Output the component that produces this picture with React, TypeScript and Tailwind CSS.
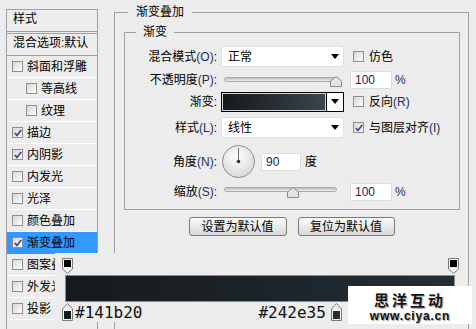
import React from "react";

type LayerItem = { label: string; on?: boolean; indent?: boolean; active?: boolean };

const layers: LayerItem[] = [
  { label: "斜面和浮雕" },
  { label: "等高线", indent: true },
  { label: "纹理", indent: true },
  { label: "描边", on: true },
  { label: "内阴影", on: true },
  { label: "内发光" },
  { label: "光泽" },
  { label: "颜色叠加" },
  { label: "渐变叠加", on: true, active: true },
  { label: "图案叠加" },
  { label: "外发光" },
  { label: "投影" },
];

const Check = ({ on = false }: { on?: boolean }) => (
  <span className="relative block h-[11px] w-[11px] shrink-0 border border-[#8e8f8f] bg-linear-to-br from-[#d6d6d6] to-white">
    {on && (
      <svg className="absolute left-[1px] top-[1px]" width="8" height="8" viewBox="0 0 8 8">
        <path d="M0.8 4L3 6.4L7.2 1" fill="none" stroke="#34449a" strokeWidth="1.6" />
      </svg>
    )}
  </span>
);

const Arrow = () => (
  <svg width="8" height="5" viewBox="0 0 8 5">
    <path d="M0 0H8L4 5Z" fill="#000" />
  </svg>
);

const Thumb = () => (
  <svg width="12" height="11" viewBox="0 0 12 11">
    <path d="M0.5 10.5V5L6 0.5L11.5 5V10.5Z" fill="#e4e4e4" stroke="#8a8a8a" />
  </svg>
);

// gradient stop markers
const StopTop = ({ color }: { color: string }) => (
  <svg width="11" height="16" viewBox="0 0 11 16">
    <path d="M0.5 0.5H10.5V11L5.5 15.5L0.5 11Z" fill="#f2f2f2" stroke="#7a7a7a" />
    <rect x="2" y="2" width="7" height="7" fill={color} />
  </svg>
);

const StopBottom = ({ color }: { color: string }) => (
  <svg width="11" height="18" viewBox="0 0 11 18">
    <path d="M0.5 17.5H10.5V6L5.5 0.5L0.5 6Z" fill="#f2f2f2" stroke="#7a7a7a" />
    <rect x="2" y="8" width="7" height="8" fill={color} />
  </svg>
);

const Label = ({ text, key_ }: { text: string; key_?: string }) => (
  <div className="w-[92px] shrink-0 whitespace-nowrap text-right leading-[16px]">
    {text}
    {key_ && <span className="text-[#1d2c5c]">({key_})</span>}:
  </div>
);

const Select = ({ value }: { value: string }) => (
  <div className="ml-[4px] flex h-[21px] w-[123px] shrink-0 items-center justify-between rounded-[2px] border border-[#e0e0e0] bg-white pl-[6px] pr-[4px]">
    <span className="leading-[16px]">{value}</span>
    <Arrow />
  </div>
);

const NumBox = ({ value, w = "w-[42px]" }: { value: string; w?: string }) => (
  <div className={`flex h-[18px] ${w} shrink-0 items-center rounded-[2px] border border-[#dcdcdc] bg-white pl-[4px] leading-[16px] text-[#1c1c50]`}>
    {value}
  </div>
);

const CheckLabel = ({ label, on, k }: { label: string; on?: boolean; k?: string }) => (
  <div className="ml-[9px] flex items-center gap-[5px] whitespace-nowrap leading-[16px]">
    <Check on={on} />
    <span>
      {label}
      {k && <span className="text-[#1d2c5c]">({k})</span>}
    </span>
  </div>
);

export default function App() {
  return (
    <div className="relative flex h-[329px] w-[476px] items-start overflow-hidden bg-[#ececec] font-['Liberation_Sans','Noto_Sans_CJK_SC',sans-serif] text-[12px] text-black">
      {/* style list */}
      <div className="ml-[6px] mt-[9px] h-[330px] w-[92px] shrink-0 border border-[#a0a0a0]">
        <div className="h-[22px] border-b border-[#a0a0a0] pl-[6px] pt-[1px] leading-[16px]">样式</div>
        <div className="mt-[1px] h-[23px] whitespace-nowrap border-y border-[#a0a0a0] pl-[6px] pt-[1px] leading-[16px]">
          混合选项:默认
        </div>
        {layers.map((l) => (
          <div
            key={l.label}
            className={`flex h-[22px] items-center gap-[4px] border-b ${
              l.active ? "border-[#3399ff] bg-[#3399ff]" : "border-white"
            } ${l.indent ? "pl-[19px]" : "pl-[5px]"}`}
          >
            <Check on={l.on} />
            <span className="whitespace-nowrap leading-[16px]">{l.label}</span>
          </div>
        ))}
      </div>

      {/* gradient overlay panel */}
      <fieldset className="ml-[16px] mt-[4px] h-[340px] w-[355px] shrink-0 border border-[#a0a0a0]">
        <legend className="ml-[13px] px-[8px] leading-[16px]">渐变叠加</legend>

        <fieldset className="ml-[9px] mt-[4px] w-[336px] border border-[#a0a0a0] pb-[7px]">
          <legend className="ml-[11px] px-[7px] leading-[16px]">渐变</legend>

          <div className="mt-[6px] flex h-[21px] items-center">
            <Label text="混合模式" key_="O" />
            <Select value="正常" />
            <CheckLabel label="仿色" />
          </div>

          <div className="mt-[3px] flex h-[20px] items-center">
            <Label text="不透明度" key_="P" />
            <div className="relative ml-[4px] h-full w-[123px] shrink-0">
              <div className="absolute left-[3px] top-[7px] h-[5px] w-[114px] rounded-full border border-[#a9a9a9] bg-linear-to-b from-[#bdbdbd] to-[#ececec]" />
              <div className="absolute left-[109px] top-[6px]">
                <Thumb />
              </div>
            </div>
            <div className="ml-[6px]">
              <NumBox value="100" />
            </div>
            <span className="ml-[3px] leading-[16px] text-[#1d2c5c]">%</span>
          </div>

          <div className="mt-[1px] flex h-[21px] items-center">
            <Label text="渐变" />
            <div className="ml-[4px] flex h-[20px] w-[123px] shrink-0 border border-black bg-[#d8d8d8]">
              <div className="m-[1px] flex-1 bg-linear-to-r from-[#141b20] to-[#3b454c]" />
              <div className="flex w-[17px] items-center justify-center border-l border-black bg-white">
                <Arrow />
              </div>
            </div>
            <CheckLabel label="反向" k="R" />
          </div>

          <div className="mt-[5px] flex h-[21px] items-center">
            <Label text="样式" key_="L" />
            <Select value="线性" />
            <CheckLabel label="与图层对齐" k="I" on />
          </div>

          <div className="mt-[7px] flex h-[33px] items-center">
            <Label text="角度" key_="N" />
            <svg className="ml-[5px] shrink-0" width="33" height="33" viewBox="0 0 33 33">
              <defs>
                <radialGradient id="dial" cx="45%" cy="35%" r="70%">
                  <stop offset="0" stopColor="#ffffff" />
                  <stop offset="1" stopColor="#d6d6d6" />
                </radialGradient>
              </defs>
              <circle cx="16.5" cy="16.5" r="16" fill="url(#dial)" stroke="#8c8c8c" />
              <line x1="16.5" y1="16.5" x2="16.5" y2="3" stroke="#6a6a6a" />
              <circle cx="16.5" cy="16.5" r="1.8" fill="#333" />
            </svg>
            <div className="ml-[6px]">
              <NumBox value="90" w="w-[40px]" />
            </div>
            <span className="ml-[4px] leading-[16px]">度</span>
          </div>

          <div className="mt-[4px] flex h-[20px] items-center">
            <Label text="缩放" key_="S" />
            <div className="relative ml-[4px] h-full w-[123px] shrink-0">
              <div className="absolute left-[3px] top-[5px] h-[5px] w-[113px] rounded-full border border-[#a9a9a9] bg-linear-to-b from-[#bdbdbd] to-[#ececec]" />
              <div className="absolute left-[66px] top-[5px]">
                <Thumb />
              </div>
            </div>
            <div className="ml-[6px]">
              <NumBox value="100" />
            </div>
            <span className="ml-[3px] leading-[16px] text-[#1d2c5c]">%</span>
          </div>
        </fieldset>

        <div className="mt-[7px] flex justify-center gap-[11px]">
          <button className="h-[19px] w-[98px] rounded-[3px] border border-[#7a7a7a] bg-linear-to-b from-[#fafafa] to-[#d9d9d9] leading-[16px]">
            设置为默认值
          </button>
          <button className="h-[19px] w-[97px] rounded-[3px] border border-[#7a7a7a] bg-linear-to-b from-[#fafafa] to-[#d9d9d9] leading-[16px]">
            复位为默认值
          </button>
        </div>
      </fieldset>

      {/* gradient editor strip laid over the dialog */}
      <div className="absolute left-[55px] top-[253px] h-[69px] w-[411px] bg-[#ececec] pt-[5px]">
        <div className="ml-[7px] flex w-[397px] justify-between">
          <StopTop color="#000" />
          <StopTop color="#000" />
        </div>
        <div className="ml-[10px] mt-[1px] h-[27px] w-[390px] border border-[#8c8c8c] bg-linear-to-r from-[#141b20] to-[#242e35]" />
        <div className="ml-[7px] flex items-center font-['DejaVu_Sans_Mono',monospace] text-[16px] leading-[16px] text-[#111]">
          <StopBottom color="#141b20" />
          <span className="ml-[2px] mt-[3px]">#141b20</span>
          <span className="ml-[116px] mt-[3px]">#242e35</span>
          <div className="ml-[5px]">
            <StopBottom color="#242e35" />
          </div>
        </div>
      </div>

      {/* watermark */}
      <div className="absolute left-[348px] top-[286px] flex h-[38px] w-[124px] flex-col items-center bg-white pt-[6px]">
        <span className="font-['Noto_Sans_CJK_SC',sans-serif] text-[15px] font-bold leading-[16px] tracking-[3px] text-[#111] [text-shadow:0_0_1px_#fff,1px_1px_1px_#9a9a9a]">
          思洋互动
        </span>
        <span className="mt-[2px] text-[12px] font-bold leading-[12px] tracking-[0.8px] text-[#111] [text-shadow:1px_1px_1px_#9a9a9a]">
          www.ciya.cn
        </span>
      </div>
    </div>
  );
}
